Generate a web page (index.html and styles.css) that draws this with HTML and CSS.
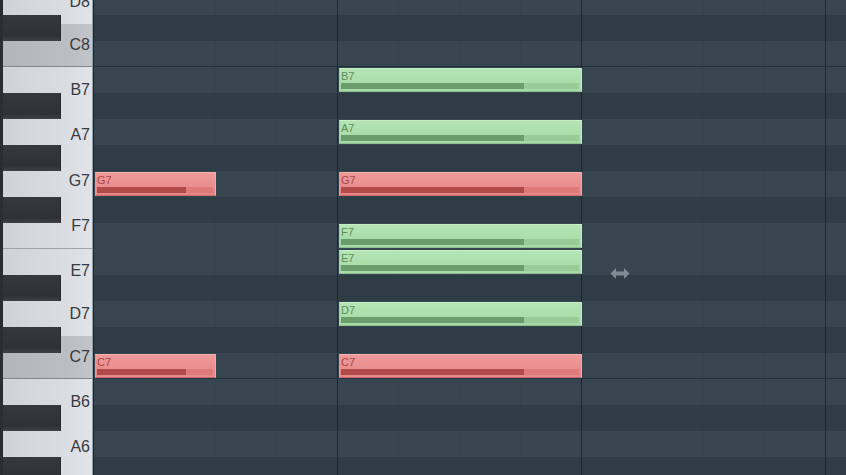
FILE: index.html
```html
<!DOCTYPE html>
<html>
<head>
  <meta charset="UTF-8">
  <link rel="stylesheet" href="styles.css">
  <title>Piano Roll</title>
</head>
<body>
  <div class="roll">
    <!-- teclado -->
    <div class="keyboard">
      <div class="white-keys">
        <div class="wkey short"><span>D8</span></div>
        <div class="wkey short c"><span>C8</span></div>
        <div class="wkey long"><span>B7</span></div>
        <div class="wkey long"><span>A7</span></div>
        <div class="wkey long"><span>G7</span></div>
        <div class="wkey long f"><span>F7</span></div>
        <div class="wkey short"><span>E7</span></div>
        <div class="wkey short"><span>D7</span></div>
        <div class="wkey short c"><span>C7</span></div>
        <div class="wkey long"><span>B6</span></div>
        <div class="wkey long"><span>A6</span></div>
        <div class="wkey long"></div>
      </div>
      <div class="black-keys">
        <div class="bslot"></div>
        <div class="bslot bkey"></div>
        <div class="bslot"></div>
        <div class="bslot"></div>
        <div class="bslot bkey"></div>
        <div class="bslot"></div>
        <div class="bslot bkey"></div>
        <div class="bslot"></div>
        <div class="bslot bkey"></div>
        <div class="bslot"></div>
        <div class="bslot"></div>
        <div class="bslot bkey"></div>
        <div class="bslot"></div>
        <div class="bslot bkey"></div>
        <div class="bslot"></div>
        <div class="bslot"></div>
        <div class="bslot bkey"></div>
        <div class="bslot"></div>
        <div class="bslot bkey"></div>
      </div>
    </div>

    <!-- grade de notas -->
    <div class="grid">
      <div class="row light"></div>
      <div class="row dark"></div>
      <div class="row light octave"></div>
      <div class="row light">
        <div class="note green long-note"><span>B7</span><div class="track"><div class="vel"></div></div></div>
      </div>
      <div class="row dark"></div>
      <div class="row light">
        <div class="note green long-note"><span>A7</span><div class="track"><div class="vel"></div></div></div>
      </div>
      <div class="row dark"></div>
      <div class="row light">
        <div class="note red short-note"><span>G7</span><div class="track"><div class="vel"></div></div></div>
        <div class="note red long-note"><span>G7</span><div class="track"><div class="vel"></div></div></div>
      </div>
      <div class="row dark"></div>
      <div class="row light">
        <div class="note green long-note"><span>F7</span><div class="track"><div class="vel"></div></div></div>
      </div>
      <div class="row light">
        <div class="note green long-note"><span>E7</span><div class="track"><div class="vel"></div></div></div>
      </div>
      <div class="row dark"></div>
      <div class="row light">
        <div class="note green long-note"><span>D7</span><div class="track"><div class="vel"></div></div></div>
      </div>
      <div class="row dark"></div>
      <div class="row light octave">
        <div class="note red short-note"><span>C7</span><div class="track"><div class="vel"></div></div></div>
        <div class="note red long-note"><span>C7</span><div class="track"><div class="vel"></div></div></div>
      </div>
      <div class="row light"></div>
      <div class="row dark"></div>
      <div class="row light"></div>
      <div class="row dark"></div>

      <svg class="cursor" width="20" height="13" viewBox="0 0 20 13">
        <path d="M0.5 6.5 L6 1 V4.5 H14 V1 L19.5 6.5 L14 12 V8.5 H6 V12 Z" fill="#7f8b93"/>
      </svg>
    </div>
  </div>
</body>
</html>
```

FILE: styles.css
```css
body {
  margin: 0;
  padding: 0;
  background-color: #33424c;
  font-family: "Liberation Sans", Arial, sans-serif;
  overflow: hidden;
}

.roll {
  display: flex;
  width: 846px;
  height: 475px;
  overflow: hidden;
}

/* teclado */
.keyboard {
  position: relative;
  width: 89px;
  flex: none;
  overflow: hidden;
  border-left: 3px solid #2a2d32;
  border-right: 1px solid #97a0a8;
  box-shadow: 1px 0 0 #1b252c;
  margin-right: 1px;
}

.white-keys {
  margin-top: -19.667px;
}

.wkey {
  box-sizing: border-box;
  display: flex;
  align-items: center;
  justify-content: flex-end;
  padding-right: 2px;
  background: linear-gradient(to right, #cfd2d7, #dadde2 70%, #e0e3e7);
  color: #383b41;
  font-size: 16px;
}

.wkey.short {
  height: 43.333px;
}

.wkey.long {
  height: 45.5px;
}

.wkey.c {
  background: linear-gradient(to right, #b2b5ba, #babdc2 70%, #c1c4c8);
  border-bottom: 1px solid #7f8791;
}

.wkey.f {
  border-bottom: 1px solid #a0a5ac;
}

.black-keys {
  position: absolute;
  top: 0;
  left: 0;
  width: 58px;
  margin-top: -11px;
}

.bslot {
  height: 26px;
}

.bkey {
  background: linear-gradient(to bottom, #37383b, #303134 80%, #3f4043);
  border-right: 1px solid #28292c;
}

/* grade */
.grid {
  position: relative;
  flex: 1;
  margin-top: -11px;
}

.row {
  box-sizing: border-box;
  height: 26px;
  display: grid;
  grid-template-columns: repeat(13, 61px);
  background-image:
    repeating-linear-gradient(to right,
      transparent 0 243px, #1c2830 243px 244px),
    repeating-linear-gradient(to right,
      transparent 0 60px, rgba(0, 0, 0, 0.04) 60px 61px);
}

.row.light {
  background-color: #36454f;
}

.row.dark {
  background-color: #2e3c46;
}

.row.octave {
  border-bottom: 1px solid #24313a;
}

.note {
  grid-row: 1;
  box-sizing: border-box;
  height: 24px;
  margin: 1px 0 0 1px;
  padding: 2px 2px 2px 1px;
  display: flex;
  flex-direction: column;
  border: 1px solid;
  font-size: 11px;
  line-height: 11px;
}

.short-note {
  grid-column: 1 / span 2;
}

.long-note {
  grid-column: 5 / span 4;
}

.note .track {
  margin-top: auto;
  height: 6px;
}

.note .vel {
  width: 77%;
  height: 100%;
}

.note.green {
  background: linear-gradient(to bottom, #b4e4b4, #a5d9a5);
  border-color: #c6efc6 #c3ebc3 #8dbd8d #9fd09f;
  color: #5e8e5e;
}

.note.green .track {
  background-color: #98cb98;
}

.note.green .vel {
  background-color: #6b9c6b;
}

.note.red {
  background: linear-gradient(to bottom, #ef9a9a, #e68686);
  border-color: #f5b0b0 #f2a8a8 #c86a6a #e59a9a;
  color: #a94646;
}

.note.red .track {
  background-color: #de7a7a;
}

.note.red .vel {
  background-color: #b34a4a;
}

.cursor {
  position: absolute;
  left: 516px;
  top: 278px;
}
```
